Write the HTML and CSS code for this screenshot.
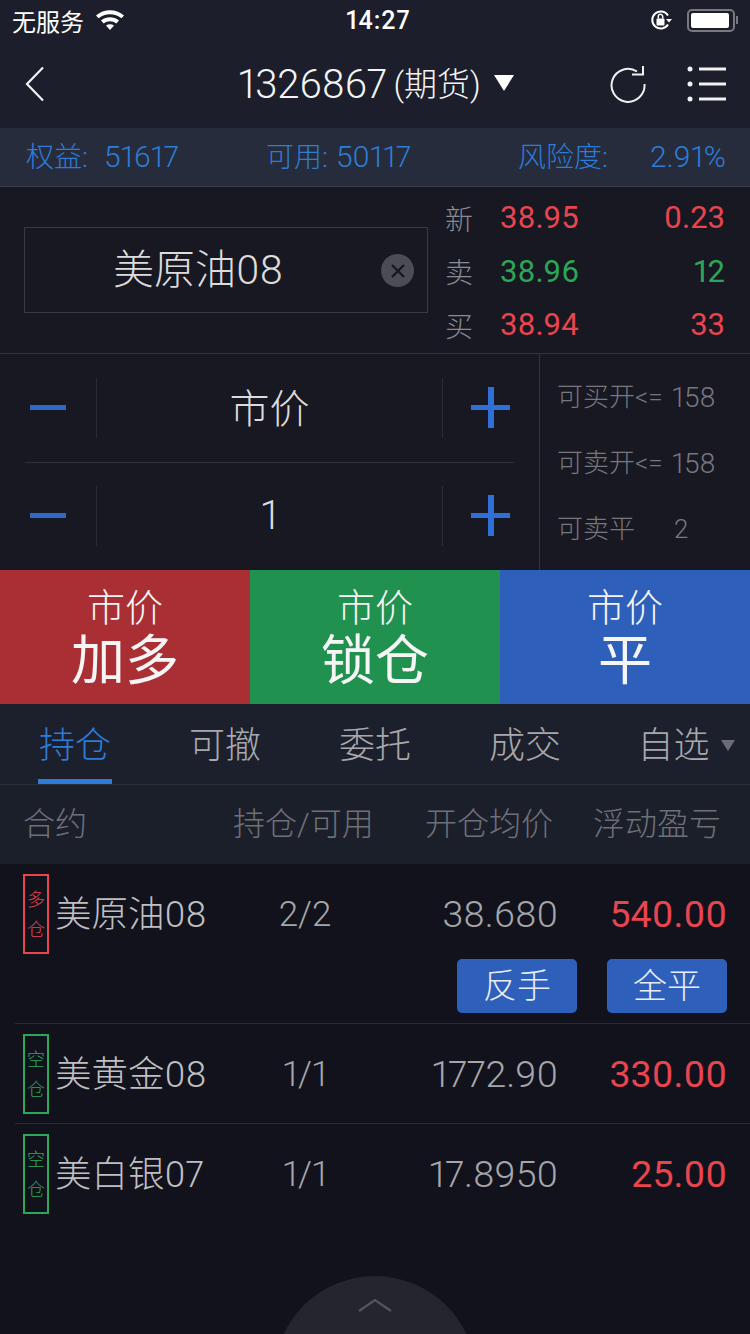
FILE: index.html
```html
<!DOCTYPE html>
<html lang="zh-CN">
<head>
<meta charset="utf-8">
<title>交易</title>
<link rel="stylesheet" href="styles.css">
</head>
<body>
<div class="app">
  <header class="top">
    <div class="status">
      <div class="status-left">
        <span>无服务</span>
        <svg class="wifi" width="30" height="22" viewBox="0 0 30 22"><path d="M1 7.500C9 .5 21 .5 29 7.500l-2.600 2.800C19.800 4.800 10.200 4.800 3.600 10.300z" fill="#fff"/><path d="M6 12.500c5.400-4.400 12.600-4.400 18 0l-2.700 2.900c-3.800-2.900-8.800-2.900-12.600 0z" fill="#fff"/><path d="M11 17.500c2.500-1.700 5.500-1.700 8 0L15 22z" fill="#fff"/></svg>
      </div>
      <span class="clock">14:27</span>
      <div class="status-right">
        <svg width="24" height="24" viewBox="0 0 24 24"><path d="M19 16.500A8.500 8.500 0 1 1 19 7.500" fill="none" stroke="#fff" stroke-width="2"/><path d="M17 11h6l-3 3.500z" fill="#fff"/><rect x="7.500" y="10.500" width="8" height="7" rx="1" fill="#fff"/><path d="M9.300 10.500V8.500a2.200 2.200 0 0 1 4.400 0v2" fill="none" stroke="#fff" stroke-width="1.500"/></svg>
        <div class="battery"><div class="battery-fill"></div></div>
        <div class="battery-tip"></div>
      </div>
    </div>
    <nav class="nav">
      <svg class="back" width="22" height="36" viewBox="0 0 22 36"><path d="M19 1.500 3 18l16 16.500" fill="none" stroke="#f2f2f2" stroke-width="2.200"/></svg>
      <div class="title">
        <span class="title-num">1326867</span><span class="title-kind">(期货)</span>
        <svg width="20" height="16" viewBox="0 0 20 16"><path d="M0 0h20L10 16z" fill="#fff"/></svg>
      </div>
      <div class="nav-tools">
        <svg width="38" height="38" viewBox="0 0 38 38"><path d="M28 6.500A16.500 16.500 0 1 0 35.500 19" fill="none" stroke="#f0f0f0" stroke-width="2"/><path d="M23 9.500h11V1" fill="none" stroke="#f0f0f0" stroke-width="2"/></svg>
        <svg width="40" height="36" viewBox="0 0 40 36"><g fill="#f2f2f2"><circle cx="3" cy="3" r="2.500"/><circle cx="3" cy="18" r="2.500"/><circle cx="3" cy="33" r="2.500"/><rect x="12" y="1.500" width="27" height="3"/><rect x="12" y="16.500" width="27" height="3"/><rect x="12" y="31.500" width="27" height="3"/></g></svg>
      </div>
    </nav>
  </header>

  <section class="account">
    <span class="acc acc-a"><span>权益:</span><span class="acc-num wide">51617</span></span>
    <span class="acc acc-b"><span>可用:</span><span class="acc-num">50117</span></span>
    <span class="acc acc-c"><span>风险度:</span><span class="acc-num">2.91%</span></span>
  </section>

  <section class="quote">
    <div class="symbol">
      <span class="symbol-name">美原油08</span>
      <span class="clear"><svg width="16" height="16" viewBox="0 0 16 16"><path d="M2 2l12 12M14 2 2 14" stroke="#16161f" stroke-width="2.200"/></svg></span>
    </div>
    <div class="prices">
      <div class="price-row"><span class="price-label">新</span><span class="price up">38.95</span><span class="price-val up">0.23</span></div>
      <div class="price-row"><span class="price-label">卖</span><span class="price down">38.96</span><span class="price-val down">12</span></div>
      <div class="price-row"><span class="price-label">买</span><span class="price up">38.94</span><span class="price-val up">33</span></div>
    </div>
  </section>

  <section class="order">
    <div class="steppers">
      <div class="stepper">
        <span class="step"><i class="bar"></i></span>
        <span class="step-value cjk">市价</span>
        <span class="step"><i class="bar"></i><i class="bar vert"></i></span>
      </div>
      <div class="stepper">
        <span class="step"><i class="bar"></i></span>
        <span class="step-value">1</span>
        <span class="step"><i class="bar"></i><i class="bar vert"></i></span>
      </div>
    </div>
    <div class="limits">
      <div class="limit"><span class="limit-name">可买开&lt;=</span><span class="limit-num">158</span></div>
      <div class="limit"><span class="limit-name">可卖开&lt;=</span><span class="limit-num">158</span></div>
      <div class="limit"><span class="limit-name">可卖平</span><span class="limit-gap">2</span></div>
    </div>
  </section>

  <section class="actions">
    <button class="action red"><span>市价</span><strong>加多</strong></button>
    <button class="action green"><span>市价</span><strong>锁仓</strong></button>
    <button class="action blue"><span>市价</span><strong>平</strong></button>
  </section>

  <div class="tabs">
    <span class="tab active">持仓</span>
    <span class="tab">可撤</span>
    <span class="tab">委托</span>
    <span class="tab">成交</span>
    <span class="tab tab-more">自选<i class="caret"></i></span>
  </div>

  <div class="thead">
    <span class="c-name">合约</span>
    <span class="c-pos">持仓/可用</span>
    <span class="c-avg">开仓均价</span>
    <span class="c-pl">浮动盈亏</span>
  </div>

  <section class="list">
    <article class="row row-open">
      <div class="cells">
        <span class="tag long">多<br>仓</span>
        <span class="name">美原油08</span>
        <span class="pos">2/2</span>
        <span class="avg">38.680</span>
        <span class="pl">540.00</span>
      </div>
      <div class="row-actions"><button class="mini">反手</button><button class="mini">全平</button></div>
    </article>
    <article class="row">
      <div class="cells">
        <span class="tag short">空<br>仓</span>
        <span class="name">美黄金08</span>
        <span class="pos">1/1</span>
        <span class="avg">1772.90</span>
        <span class="pl">330.00</span>
      </div>
    </article>
    <article class="row">
      <div class="cells">
        <span class="tag short">空<br>仓</span>
        <span class="name">美白银07</span>
        <span class="pos">1/1</span>
        <span class="avg">17.8950</span>
        <span class="pl">25.00</span>
      </div>
    </article>
  </section>

  <div class="drawer"><svg width="34" height="14" viewBox="0 0 34 14"><path d="M1 13 17 2l16 11" fill="none" stroke="#55555c" stroke-width="2.200"/></svg></div>
</div>
</body>
</html>
```

FILE: styles.css
```css
* { box-sizing: border-box; }
html, body { margin: 0; padding: 0; }
body {
  width: 750px;
  height: 1334px;
  overflow: hidden;
  background: #12121c;
  font-family: Roboto, "Noto Sans CJK SC", sans-serif;
  font-weight: 300;
  font-variant-numeric: proportional-nums;
}
.app { position: relative; width: 750px; height: 1334px; overflow: hidden; display: flex; flex-direction: column; }

/* top bars */
.top { height: 128px; background: #1c1f2b; color: #fff; }
.status { height: 40px; padding: 0 12px; display: flex; align-items: center; justify-content: space-between; position: relative; font-size: 24px; font-weight: 400; }
.status-left { display: flex; align-items: center; gap: 11px; }
.wifi { margin-top: -3px; }
.clock { font-size: 25px; font-weight: 500; letter-spacing: 1px; position: absolute; left: 346px; }
.status-right { display: flex; align-items: center; }
.status-right svg { margin-right: 14px; }
.battery { width: 48px; height: 23px; border: 2px solid #77797f; border-radius: 5px; padding: 2px; }
.battery-fill { width: 38px; height: 15px; background: #fff; border-radius: 2px; }
.battery-tip { width: 2px; height: 8px; background: #77797f; margin-left: 1px; }

.nav { height: 88px; position: relative; display: flex; align-items: center; justify-content: space-between; padding: 0 24px; }
.back { display: block; }
.title { position: absolute; left: 238px; top: 0; height: 88px; display: flex; align-items: center; color: #f4f4f4; }
.title-num { font-size: 40px; font-weight: 300; letter-spacing: -.2px; }
.title-kind { font-size: 33px; margin-left: 7px; font-weight: 300; padding-bottom: 4px; }
.title svg { margin-left: 13px; margin-top: -2px; }
.nav-tools { display: flex; align-items: center; gap: 40px; margin-right: -1px; }

/* account summary */
.account { height: 59px; flex: none; background: #262c3c; border-bottom: 1px solid #3c3f49; color: #2e7cd6; font-size: 28px; display: flex; align-items: center; padding: 0 24px 4px 26px; }
.acc { display: flex; align-items: baseline; }
.acc-num { margin-left: 8px; font-size: 30px; }
.acc-num.wide { margin-left: 16px; }
.acc-a { width: 240px; }
.acc-b { width: 252px; }
.acc-c { flex: 1; justify-content: space-between; }

/* quote */
.quote { height: 167px; flex: none; border-bottom: 1px solid #33343d; background: #181822; display: flex; padding-left: 24px; }
.symbol { width: 404px; height: 86px; margin-top: 40px; border: 1px solid #383942; display: flex; align-items: center; justify-content: center; position: relative; padding: 0 56px 8px 0; }
.symbol-name { font-size: 41px; color: #dcdcdc; }
.clear { position: absolute; right: 13px; top: 26px; width: 33px; height: 33px; border-radius: 50%; background: #4c4c54; display: flex; align-items: center; justify-content: center; }
.prices { flex: 1; padding: 4px 25px 0 17px; display: flex; flex-direction: column; }
.price-row { height: 53.500px; display: flex; align-items: center; }
.price-label { width: 56px; font-size: 28px; color: #8a8a90; }
.price { font-size: 31px; font-weight: 400; margin-left: -1px; }
.price-val { flex: 1; text-align: right; font-size: 31px; font-weight: 400; }
.up { color: #e8454f; }
.down { color: #2ca757; }

/* order entry */
.order { height: 216px; flex: none; background: #181822; display: flex; }
.steppers { width: 539px; padding: 0 25px; display: flex; flex-direction: column; }
.stepper { height: 108px; display: flex; align-items: center; }
.stepper:first-child { height: 109px; border-bottom: 1px solid #2e2f38; }
.step { height: 60px; position: relative; flex: none; }
.stepper .step:first-child { width: 71px; }
.stepper .step:last-child { width: 71px; }
.bar { position: absolute; left: 5px; top: 27px; width: 36px; height: 5px; background: #2f68c8; }
.stepper .step:last-child .bar { left: 28px; width: 39px; background: #2f6fd8; }
.stepper .step:last-child .bar.vert { left: 45px; top: 9px; width: 6px; height: 41px; }
.step-value { flex: 1; height: 60px; line-height: 60px; text-align: center; font-size: 40px; color: #dcdcdc; border-left: 1px solid #2a2b33; border-right: 1px solid #2a2b33; }
.step-value.cjk { line-height: 64px; }
.limits { flex: 1; border-left: 1px solid #33343d; padding: 10px 0 0 17px; display: flex; flex-direction: column; color: #77777e; font-size: 26px; }
.limit { height: 66px; display: flex; align-items: center; }
.limit-name { margin-bottom: 5px; }
.limit-num { margin-left: 9px; font-size: 28px; }
.limit-gap { margin-left: 39px; }

/* action buttons */
.actions { height: 134px; flex: none; display: flex; }
.action { flex: 1; border: 0; padding: 0; color: #f5f5f5; font-family: inherit; display: flex; flex-direction: column; align-items: center; font-weight: 300; }
.action span { font-size: 38px; line-height: 40px; margin-top: 18px; }
.action strong { font-size: 54px; font-weight: 400; line-height: 68px; }
.red { background: #a92f34; }
.green { background: #219150; }
.blue { background: #2e60bb; }

/* tabs */
.tabs { height: 81px; flex: none; background: #1c202c; border-bottom: 1px solid #2d303b; display: flex; }
.tab { width: 150px; text-align: center; font-size: 36px; line-height: 84px; color: #a8a8ac; position: relative; }
.tab.active { color: #2e7cd6; }
.tab.active::after { content: ""; position: absolute; left: 38px; bottom: 0; width: 74px; height: 5px; background: #2e7cd6; }
.tab-more { padding-left: 22px; white-space: nowrap; }
.caret { display: inline-block; width: 0; height: 0; margin-left: 11px; vertical-align: 7px; border-left: 7px solid transparent; border-right: 7px solid transparent; border-top: 11px solid #6a6d76; }

.thead { height: 79px; flex: none; background: #1b1f2a; display: flex; align-items: center; padding-bottom: 8px; color: #6e7078; font-size: 32px; }
.c-name { width: 233px; padding-left: 23px; }
.c-pos { width: 192px; }
.c-avg { width: 168px; }
.c-pl { flex: 1; }

/* positions */
.list { flex: 1; background: #12121c; }
.row { height: 100px; margin-left: 15px; padding-top: 10px; border-bottom: 1px solid #2a2a32; }
.row:last-child { border-bottom: 0; }
.row-open { height: 160px; }
.cells { display: flex; align-items: center; height: 80px; }
.tag { width: 26px; height: 80px; margin-left: 8px; border: 2px solid; font-size: 18px; line-height: 30px; text-align: center; padding-top: 9px; flex: none; font-weight: 300; }
.long { border-color: #e8454f; color: #e8454f; }
.short { border-color: #2ca757; color: #2ca757; }
.name { width: 191px; margin: 0 0 6px 6px; font-size: 36.500px; color: #bfbfc2; flex: none; }
.pos { width: 90px; text-align: center; font-size: 35px; color: #a6a6aa; flex: none; margin-left: 14px; }
.avg { width: 208px; text-align: right; font-size: 37.500px; color: #a6a6aa; flex: none; }
.pl { flex: 1; text-align: right; font-size: 37.500px; font-weight: 400; color: #e8454f; padding-right: 23px; }
.row-actions { display: flex; justify-content: flex-end; gap: 30px; padding-right: 23px; margin-top: 5px; }
.mini { width: 120px; height: 54px; border: 0; border-radius: 5px; background: #2e60bb; color: #e8ecf5; font-family: inherit; font-size: 34px; font-weight: 300; padding: 0 0 6px; }

/* pull-up handle, sits over the list */
.drawer { position: absolute; left: 274px; top: 1276px; width: 202px; height: 202px; border-radius: 50%; background: #25252e; display: flex; justify-content: center; padding-top: 22px; }
.drawer svg { display: block; }
```
